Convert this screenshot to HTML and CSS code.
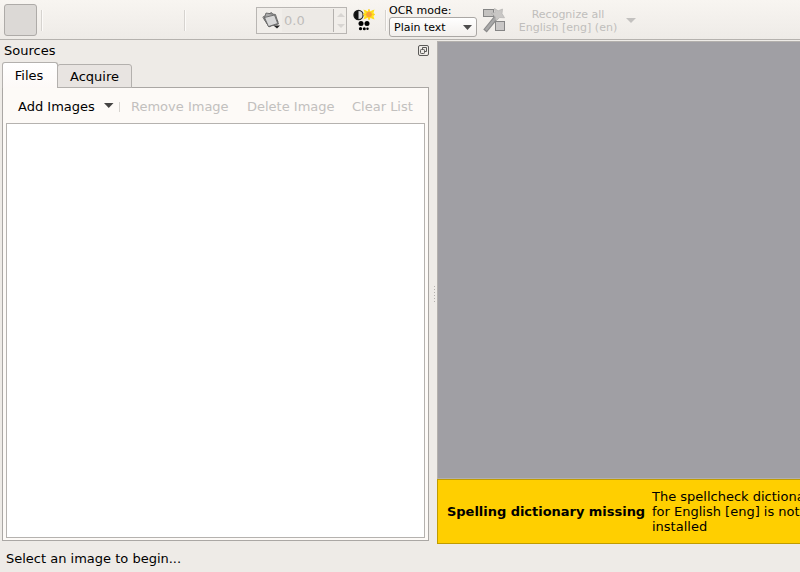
FILE: index.html
```html
<!DOCTYPE html>
<html lang="en">
<head>
<meta charset="utf-8">
<title>OCR</title>
<link rel="stylesheet" href="styles.css">
</head>
<body>
<header class="toolbar">
  <button class="toggle" aria-pressed="true"></button>
  <i class="sep sep-first"></i>
  <i class="sep sep-second"></i>
  <div class="spin">
    <svg class="rotate-icon" width="20" height="20" viewBox="0 0 20 20">
      <g stroke="#5d5d5d" stroke-width=".8">
        <path d="M0.800 6 9.500 1.500l6.500 9-9 5.500z" fill="#c2c2c2"/>
        <path d="M4 2 13.500 3.500 16.500 13 7 15.500 2 8z" fill="#a9a9a9"/>
        <path d="M2.500 6.500 12.500 4l3.200 8.500-9.200 3z" fill="#d8d8d8"/>
      </g>
      <path d="M11.500 14.500h6.500l-3 3z" fill="#222"/>
    </svg>
    <span class="spin-value">0.0</span>
    <span class="spin-arrows">
      <svg width="8" height="4"><path d="M0 4 4 0 8 4z"/></svg>
      <svg width="8" height="4"><path d="M0 0h8L4 4z"/></svg>
    </span>
  </div>
  <svg class="contrast-icon" width="22" height="22" viewBox="0 0 22 22">
    <circle cx="5.500" cy="6" r="4.600" fill="#ddd" stroke="#222" stroke-width="1.200"/>
    <path d="M5.500 1.500a4.500 4.500 0 0 0 0 9z" fill="#111"/>
    <path d="M16 0l1.200 2.300L21.500.5l-1 3.200 1.500 1.800-1.500 1.800 1 3.200-4-1.500L16 11l-1.300-2.200L10.500 10.500l1-3.200L10 5.500l1.500-1.800-1-3.200 4.200 1.800z" fill="#ffe51d"/>
    <path d="M12 1.500l8 8M20 1.500l-8 8M16 0v11M10.500 5.500h11" stroke="#ffcf1a" stroke-width="1"/>
    <circle cx="16" cy="5.500" r="2.800" fill="#f9a135"/>
    <circle cx="8" cy="14.500" r="2.500"/><circle cx="14" cy="14.500" r="2.500"/>
    <circle cx="7.500" cy="19.700" r="1.600"/><circle cx="11.300" cy="19.700" r="1.500"/><circle cx="14.500" cy="19.700" r="1.200"/>
  </svg>
  <i class="sep sep-third"></i>
  <div class="mode">
    <label>OCR mode:</label>
    <div class="combo"><span>Plain text</span><svg width="9" height="5"><path d="M0 0h9L4.500 5z" fill="#4d4d4d"/></svg></div>
  </div>
  <svg class="wand-icon" width="24" height="26" viewBox="0 0 24 26">
    <rect x="1.500" y="2.500" width="10" height="7" fill="#c4c2c0" stroke="#858585"/>
    <rect x="13.500" y="14.500" width="9" height="9" fill="#c9c7c6" stroke="#858585"/>
    <path d="M3 24 14 10.500" stroke="#8a8a8a" stroke-width="4.500"/>
    <path d="M3.800 23 13.500 11" stroke="#a8a8a8" stroke-width="2.500"/>
    <path d="M12.500 1.500l3.700 2.300L20.500 2l-.5 4.500 2.500 4.300-4.700-.3-3.800 3.200-1-4.700-4-2.500 4-1z" fill="#c9c7c5" stroke="#b5b3b1" stroke-width=".7"/>
  </svg>
  <div class="recognize">Recognize all<br>English [eng] (en)</div>
  <svg class="rec-arrow" width="10" height="5"><path d="M0 0h10L5 5z" fill="#c3c1bf"/></svg>
</header>
<main>
  <section class="dock">
    <div class="dock-title"><span>Sources</span>
      <svg width="11" height="11" viewBox="0 0 11 11" fill="none" stroke="#5b5a58">
        <rect x=".5" y=".5" width="10" height="10" rx="1.500"/>
        <rect x="2.500" y="4.500" width="4" height="4" rx=".8"/>
        <path d="M4.500 4V2.500h4v4H7"/>
      </svg>
    </div>
    <nav class="tabs"><div class="tab active">Files</div><div class="tab">Acquire</div></nav>
    <div class="pane">
      <div class="actions">
        <span class="add">Add Images</span>
        <svg width="10" height="5"><path d="M0 0h9.500L4.750 5z" fill="#454443"/></svg>
        <i class="action-sep"></i>
        <span class="off remove">Remove Image</span>
        <span class="off delete">Delete Image</span>
        <span class="off">Clear List</span>
      </div>
      <div class="list"></div>
    </div>
  </section>
  <div class="splitter"><i></i><i></i><i></i><i></i><i></i><i></i></div>
  <section class="view">
    <div class="canvas"></div>
    <div class="notice">
      <strong>Spelling dictionary missing</strong>
      <p>The spellcheck dictionary<br>for English [eng] is not<br>installed</p>
    </div>
  </section>
</main>
<footer>Select an image to begin...</footer>
</body>
</html>
```
FILE: styles.css
```css
* { box-sizing: border-box; }
body {
  margin: 0;
  width: 800px;
  height: 572px;
  overflow: hidden;
  display: flex;
  flex-direction: column;
  background: #eeebe7;
  color: #000;
  font: 13px/15px "DejaVu Sans", sans-serif;
  white-space: nowrap;
}
svg { display: block; flex: none; }
.toolbar {
  flex: none;
  height: 40px;
  display: flex;
  align-items: flex-start;
  padding-left: 4px;
  background: linear-gradient(#f8f5f1, #eeebe7);
  border-bottom: 1px solid #b5b2ae;
}
.toggle {
  flex: none;
  width: 33px;
  height: 32px;
  margin-top: 4px;
  padding: 0;
  border: 1px solid #aeaba8;
  border-radius: 3px;
  background: #dcd9d6;
}
.sep {
  flex: none;
  width: 2px;
  height: 21px;
  margin-top: 10px;
  background: #d6d3cf;
  border-right: 1px solid #fcfaf8;
}
.sep-first { margin-left: 4px; }
.sep-second { margin-left: 141px; }
.sep-third { margin-left: 10px; }
.spin {
  flex: none;
  display: flex;
  width: 91px;
  height: 27px;
  margin: 7px 0 0 70px;
  border: 1px solid #b9b6b3;
  background: #f1eeea;
  color: #bfbdbb;
}
.rotate-icon { margin: 3px 0 0 5px; }
.spin-value {
  width: 52px;
  padding: 4px 0 0 2px;
  margin: 1px 0;
  background: #edeae6;
  border-right: 1px solid #b4b1ae;
}
.spin-arrows {
  display: flex;
  flex-direction: column;
  gap: 7px;
  padding: 5px 0 0 3px;
  fill: #d8d5d2;
}
.contrast-icon { margin: 9px 0 0 6px; }
.mode { flex: none; width: 88px; margin: 3px 0 0 2px; font-size: 11px; }
.mode label { display: block; height: 14px; }
.combo {
  height: 20px;
  display: flex;
  align-items: center;
  justify-content: space-between;
  padding: 0 4px;
  border: 1px solid #aaa7a4;
  border-radius: 3px;
  background: linear-gradient(#fff, #f2efec);
}
.wand-icon { margin: 7px 0 0 5px; }
.recognize {
  width: 100px;
  margin: 8px 0 0 12px;
  font-size: 11px;
  line-height: 13px;
  text-align: center;
  color: #c0bebc;
}
.rec-arrow { margin: 18px 0 0 8px; }
main { flex: none; height: 504px; display: flex; padding-top: 1px; }
.dock { flex: none; width: 429px; padding-left: 2px; }
.dock-title {
  height: 21px;
  display: flex;
  justify-content: space-between;
  padding: 2px 0 0 2px;
}
.dock-title svg { margin-top: 4px; margin-top: 2px; }
.tabs { display: flex; align-items: flex-end; height: 26px; }
.tab {
  width: 75px;
  height: 24px;
  margin-left: -1px;
  padding-top: 4px;
  border: 1px solid #b3b0ad;
  border-radius: 3px 3px 0 0;
  background: #e8e4e1;
  text-align: center;
}
.tab.active {
  width: 56px;
  height: 26px;
  margin-left: 0;
  padding: 5px 2px 0 0;
  border-bottom: 0;
  background: linear-gradient(#fff, #fdf9f7);
  z-index: 1;
}
.pane {
  height: 454px;
  margin-top: -1px;
  padding: 0 3px 2px;
  border: 1px solid #aaa7a4;
  background: #fdfaf7;
  display: flex;
  flex-direction: column;
}
.actions {
  height: 35px;
  display: flex;
  align-items: center;
  padding: 2px 0 0 12px;
}
.add { width: 86px; }
.actions svg { margin-top: -2px; }
.action-sep { width: 1px; height: 10px; margin: 0 11px 0 5px; background: #d6d3cf; }
.off { color: #c2c0be; }
.remove { width: 116px; }
.delete { width: 105px; }
.list { flex: 1; border: 1px solid #b5b2af; background: #fff; }
.splitter {
  width: 8px;
  display: flex;
  flex-direction: column;
  gap: 2px;
  padding: 245px 0 0 5px;
}
.splitter i { flex: none; width: 1px; height: 1px; background: #b3b0ad; }
.view { flex: 1; min-width: 0; display: flex; flex-direction: column; }
.canvas {
  height: 438px;
  border: 1px solid #b3b0ad;
  border-right: 0;
  background: #a09fa4;
}
.notice {
  height: 65px;
  display: flex;
  align-items: center;
  gap: 7px;
  padding-left: 9px;
  overflow: hidden;
  border: 1px solid #c09c00;
  border-right: 0;
  background: #ffcf00;
}
.notice strong { flex: none; width: 198px; letter-spacing: -0.03px; }
.notice p { margin: 0; }
footer { padding: 7px 0 0 6px; }
```
